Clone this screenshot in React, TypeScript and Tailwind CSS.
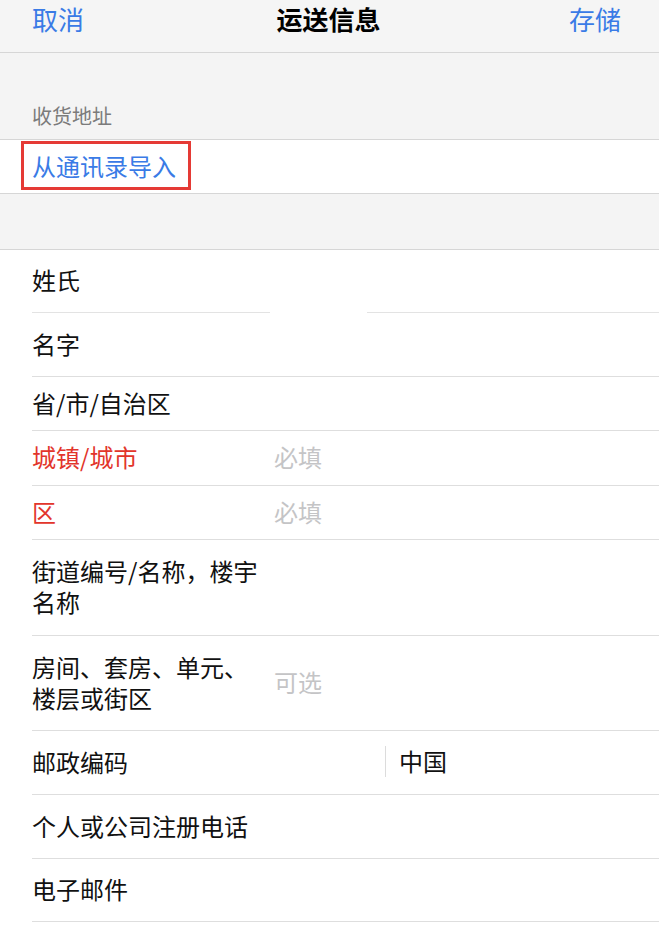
const font = { fontFamily: '"Noto Sans CJK SC", "Noto Sans", sans-serif' };

type Row = {
  label: string;
  h: string;
  red?: boolean;
  placeholder?: string;
  country?: boolean;
  splitLine?: boolean;
};

const rows: Row[] = [
  { label: '姓氏', h: 'h-[63px]', splitLine: true },
  { label: '名字', h: 'h-[64px]' },
  { label: '省/市/自治区', h: 'h-[54px]' },
  { label: '城镇/城市', h: 'h-[55px]', red: true, placeholder: '必填' },
  { label: '区', h: 'h-[54px]', red: true, placeholder: '必填' },
  { label: '街道编号/名称，楼宇名称', h: 'h-[96px]' },
  { label: '房间、套房、单元、楼层或街区', h: 'h-[95px]', placeholder: '可选' },
  { label: '邮政编码', h: 'h-[64px]', country: true },
  { label: '个人或公司注册电话', h: 'h-[64px]' },
  { label: '电子邮件', h: 'h-[63px]' },
];

function FormRow({ row }: { row: Row }) {
  return (
    <div className={`relative flex ${row.h} flex-col bg-white`}>
      <div className="flex flex-1 items-center pb-[3px] pl-[32px]">
        <div className={`w-[232px] shrink-0 text-[24px] leading-[31px] ${row.red ? 'text-[#e2352b]' : 'text-[#111]'}`}>{row.label}</div>
        {row.placeholder ? <div className="ml-[10px] text-[24px] leading-[31px] text-[#c4c4c6]">{row.placeholder}</div> : null}
        {row.country ? (
          <div className="ml-[121px] flex h-[31px] items-center border-l border-[#dcdcdc] pl-[13px] text-[24px] text-[#111]">中国</div>
        ) : null}
      </div>
      {row.splitLine ? (
        <div className="flex h-px">
          <div className="ml-[32px] w-[238px] bg-[#e3e3e3]" />
          <div className="ml-[97px] flex-1 bg-[#e3e3e3]" />
        </div>
      ) : (
        <div className="ml-[32px] h-px bg-[#dedede]" />
      )}
    </div>
  );
}

export default function App() {
  return (
    <div style={font} className="min-h-[925px] w-full bg-white">
      {/* nav */}
      <div className="flex h-[53px] items-start justify-between border-b border-[#d6d6d6] bg-[#f5f5f5] pl-[32px] pr-[38px]">
        <span className="text-[26px] leading-[38px] text-[#3a7be6]">取消</span>
        <span className="pl-[4px] text-[26px] font-semibold leading-[38px] text-black">运送信息</span>
        <span className="text-[26px] leading-[38px] text-[#3a7be6]">存储</span>
      </div>

      <div className="flex h-[86px] items-end bg-[#f4f4f4] px-[32px] pb-[12px]">
        <span className="text-[20px] leading-[22px] text-[#7b7b7b]">收货地址</span>
      </div>

      <div className="flex h-[55px] items-start border-y border-[#d6d6d6] bg-white pl-[21px] pt-[1px]">
        <div className="flex h-[49px] w-[170px] items-center border-[3px] border-[#e53a35] pl-[8px]">
          <span className="text-[24px] leading-[28px] text-[#3a7be6]">从通讯录导入</span>
        </div>
      </div>

      <div className="h-[56px] border-b border-[#d6d6d6] bg-[#f4f4f4]" />

      {rows.map((row) => (
        <FormRow key={row.label} row={row} />
      ))}
    </div>
  );
}
